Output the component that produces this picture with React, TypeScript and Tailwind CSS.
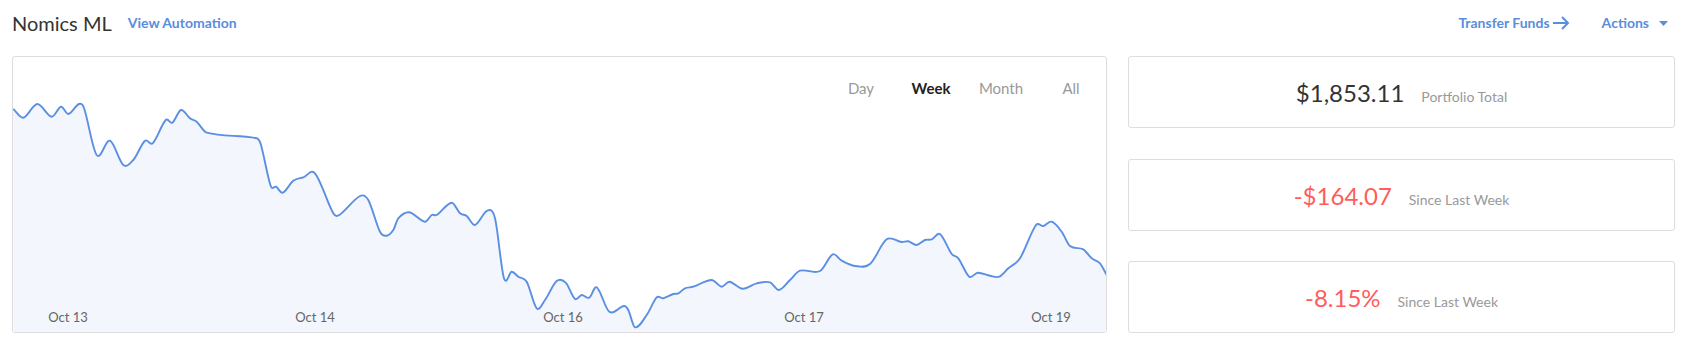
import React from 'react';

// chart points traced in page coordinates, shifted into the card below
const RAW: [number, number][] = [
  [13.3, 109], [23.3, 117.7], [37.3, 104], [51.7, 116.7], [61, 106.7], [68.3, 114], [79, 104], [84, 108],
  [96.7, 155], [110, 140.7], [123.3, 165], [133.3, 160], [145, 140.7], [152.7, 143.3], [165.7, 120], [172.3, 122.7],
  [181, 110], [190, 118.3], [196.7, 121.7], [206.7, 132.7], [256.7, 138.3], [261, 145], [270.7, 186], [276, 186.7],
  [282.7, 192.7], [293.3, 180.7], [303.3, 177.3], [315, 173.3], [333.3, 213.3], [339.3, 215], [360, 196], [368.3, 200],
  [380, 231.7], [386.7, 235.7], [393.3, 230], [398.3, 218.3], [409.3, 212.3], [425, 221.7], [431.7, 215], [436.7, 215],
  [451.7, 202.7], [460, 213.3], [466.7, 216], [475, 225], [487.3, 210.7], [495, 218.3], [504, 278.3], [511.7, 271.7],
  [518.3, 276.7], [526.7, 281.7], [536.7, 308.3], [545, 300], [556.7, 281], [565.7, 282.7], [575, 299], [581.7, 295],
  [589.3, 297.7], [596.7, 287.3], [609.3, 311.7], [624, 306], [628.3, 310], [635, 327.3], [646.7, 315], [656.7, 297.3],
  [663.3, 298.3], [673.3, 294], [678.3, 293.3], [685, 288.3], [693.3, 286.7], [711.7, 280], [721.7, 286.7], [729.3, 281.7],
  [742.7, 288.7], [756.7, 283.3], [770, 282.3], [779, 290], [790, 280], [800, 270.7], [820, 271], [832.7, 254.3],
  [841.7, 260.7], [855, 266], [870, 264], [886.7, 239.3], [901.7, 242], [908.3, 241.3], [916.7, 245], [925, 240],
  [931.7, 239.3], [940, 234], [951.7, 254], [958.3, 258.3], [969.3, 276.7], [977.7, 272.7], [990, 275.7], [999.3, 276.7],
  [1008.3, 268.3], [1020, 258.3], [1036, 225], [1043.3, 226], [1051.7, 221.7], [1061.7, 231.7], [1070, 246], [1083.3, 249.3],
  [1091.7, 258.3], [1100, 263.3], [1106.7, 275],
];

const points = RAW.map(([x, y]) => [x - 13, y - 57] as [number, number]);

// cardinal spline parameterised on x, so handles never overshoot sideways
const smoothPath = (pts: [number, number][]) => {
  const slope = (i: number) => {
    const a = pts[Math.max(i - 1, 0)];
    const b = pts[Math.min(i + 1, pts.length - 1)];
    return (b[1] - a[1]) / (b[0] - a[0]);
  };
  let d = `M${pts[0][0]},${pts[0][1]}`;
  for (let i = 0; i < pts.length - 1; i++) {
    const p1 = pts[i];
    const p2 = pts[i + 1];
    const dx = (p2[0] - p1[0]) / 3;
    const c1x = p1[0] + dx;
    const c1y = p1[1] + slope(i) * dx;
    const c2x = p2[0] - dx;
    const c2y = p2[1] - slope(i + 1) * dx;
    d += ` C${c1x.toFixed(1)},${c1y.toFixed(1)} ${c2x.toFixed(1)},${c2y.toFixed(1)} ${p2[0]},${p2[1]}`;
  }
  return d;
};

const linePath = smoothPath(points);
const areaPath = `${linePath} L${points[points.length - 1][0]},275 L${points[0][0]},275 Z`;

const tabs = ['Day', 'Week', 'Month', 'All'];

const axisLabels = [
  { label: 'Oct 13', left: 'left-[55px]' },
  { label: 'Oct 14', left: 'left-[302px]' },
  { label: 'Oct 16', left: 'left-[550px]' },
  { label: 'Oct 17', left: 'left-[791px]' },
  { label: 'Oct 19', left: 'left-[1038px]' },
];

const StatCard = ({ value, label, negative }: { value: string; label: string; negative?: boolean }) => (
  <div className="h-[72px] border border-[#dddddd] rounded-[3px] bg-white flex items-baseline justify-center gap-[17px] pt-[24px]">
    <span className={`text-[24px] leading-none ${negative ? 'text-[#ff5c5c]' : 'text-[#333333]'}`}>{value}</span>
    <span className="text-[14px] leading-none text-[#999999]">{label}</span>
  </div>
);

export default function App() {
  return (
    <div className="w-[1688px] h-[348px] bg-white font-[Lato,sans-serif] overflow-hidden">
      {/* Header */}
      <div className="h-[46px] flex items-center justify-between pl-[12px] pr-[20px]">
        <div className="flex items-center gap-[16px]">
          <h1 className="text-[20px] leading-none text-[#333333]">Nomics ML</h1>
          <a className="text-[14px] leading-none font-bold text-[#5a8ddc]">View Automation</a>
        </div>
        <div className="flex items-center gap-[32px]">
          <a className="flex items-center text-[14px] leading-none font-bold text-[#5a8ddc]">
            Transfer Funds
            <svg width="17" height="14" viewBox="0 0 17 14" className="ml-[3px]">
              <path d="M0 7H15M9 1L15 7L9 13" fill="none" stroke="#5a8ddc" strokeWidth="2" />
            </svg>
          </a>
          <a className="flex items-center text-[14px] leading-none font-bold text-[#5a8ddc]">
            Actions
            <svg width="9" height="5" viewBox="0 0 9 5" className="ml-[10px]">
              <path d="M0 0H9L4.5 5Z" fill="#5a8ddc" />
            </svg>
          </a>
        </div>
      </div>

      {/* Main */}
      <div className="mt-[10px] px-[12px] grid grid-cols-[1095px_547px] gap-[21px]">
        <div className="relative h-[277px] border border-[#dddddd] rounded-[3px] overflow-hidden">
          <svg className="absolute inset-0 w-full h-full" viewBox="0 0 1093 275" preserveAspectRatio="none">
            <path d={areaPath} fill="#f3f6fc" />
            <path d={linePath} fill="none" stroke="#5b8fe3" strokeWidth="1.9" strokeLinejoin="round" />
          </svg>
          <div className="absolute right-0 top-[24px] flex">
            {tabs.map((t) => (
              <div
                key={t}
                className={`w-[70px] text-center text-[15px] leading-none ${
                  t === 'Week' ? 'font-bold text-[#222222]' : 'text-[#999999]'
                }`}
              >
                {t}
              </div>
            ))}
          </div>
          {axisLabels.map((a) => (
            <span
              key={a.label}
              className={`absolute top-[254px] -translate-x-1/2 text-[13px] leading-none text-[#666666] ${a.left}`}
            >
              {a.label}
            </span>
          ))}
        </div>

        <div className="h-[277px] flex flex-col justify-between">
          <StatCard value="$1,853.11" label="Portfolio Total" />
          <StatCard value="-$164.07" label="Since Last Week" negative />
          <StatCard value="-8.15%" label="Since Last Week" negative />
        </div>
      </div>
    </div>
  );
}
